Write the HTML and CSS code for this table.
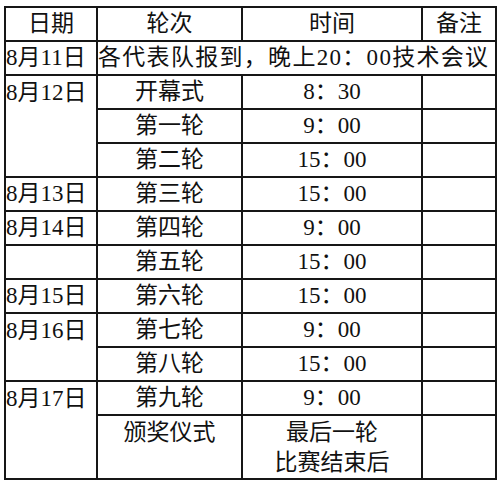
FILE: index.html
```html
<!DOCTYPE html>
<html lang="zh-CN">
<head>
<meta charset="utf-8">
<title>赛程表</title>
<link rel="stylesheet" href="styles.css">
</head>
<body>
<table class="schedule">
  <colgroup>
    <col class="c-date">
    <col class="c-round">
    <col class="c-time">
    <col class="c-note">
  </colgroup>
  <tr class="row">
    <th class="head">日期</th>
    <th class="head">轮次</th>
    <th class="head">时间</th>
    <th class="head">备注</th>
  </tr>
  <tr class="row">
    <td class="date">8月11日</td>
    <td class="wide" colspan="3">各代表队报到，晚上20：00技术会议</td>
  </tr>
  <tr class="row">
    <td class="date top" rowspan="3">8月12日</td>
    <td class="mid">开幕式</td>
    <td class="mid">8：30</td>
    <td></td>
  </tr>
  <tr class="row">
    <td class="mid">第一轮</td>
    <td class="mid">9：00</td>
    <td></td>
  </tr>
  <tr class="row">
    <td class="mid">第二轮</td>
    <td class="mid">15：00</td>
    <td></td>
  </tr>
  <tr class="row">
    <td class="date">8月13日</td>
    <td class="mid">第三轮</td>
    <td class="mid">15：00</td>
    <td></td>
  </tr>
  <tr class="row">
    <td class="date">8月14日</td>
    <td class="mid">第四轮</td>
    <td class="mid">9：00</td>
    <td></td>
  </tr>
  <tr class="row">
    <td class="date"></td>
    <td class="mid">第五轮</td>
    <td class="mid">15：00</td>
    <td></td>
  </tr>
  <tr class="row">
    <td class="date">8月15日</td>
    <td class="mid">第六轮</td>
    <td class="mid">15：00</td>
    <td></td>
  </tr>
  <tr class="row">
    <td class="date top" rowspan="2">8月16日</td>
    <td class="mid">第七轮</td>
    <td class="mid">9：00</td>
    <td></td>
  </tr>
  <tr class="row">
    <td class="mid">第八轮</td>
    <td class="mid">15：00</td>
    <td></td>
  </tr>
  <tr class="row">
    <td class="date top" rowspan="2">8月17日</td>
    <td class="mid">第九轮</td>
    <td class="mid">9：00</td>
    <td></td>
  </tr>
  <tr class="row tall">
    <td class="mid top">颁奖仪式</td>
    <td class="mid top multi">最后一轮<br>比赛结束后</td>
    <td></td>
  </tr>
</table>
</body>
</html>
```
FILE: styles.css
```css
html, body {
  margin: 0;
  padding: 0;
  background: #ffffff;
}

body {
  padding: 6px 0 0 4px;
  font-family: "Liberation Serif", "Noto Sans CJK SC", serif;
  font-size: 23px;
  color: #111111;
}

.schedule {
  border-collapse: collapse;
  table-layout: fixed;
  width: 491px;
}

.c-date { width: 92px; }
.c-round { width: 145px; }
.c-time { width: 180px; }
.c-note { width: 74px; }

.schedule th,
.schedule td {
  border: 2px solid #161616;
  padding: 0;
  line-height: 32px;
  white-space: nowrap;
  overflow: hidden;
  vertical-align: middle;
}

.row {
  height: 34px;
}

.head {
  font-weight: normal;
  text-align: center;
}

.date {
  text-align: left;
  padding-left: 1px;
}

.mid {
  text-align: center;
}

.wide {
  text-align: left;
  letter-spacing: 1.3px;
  padding-left: 1px;
}

.schedule .top {
  vertical-align: top;
  padding-top: 1px;
}

.tall {
  height: 62px;
}

.schedule .multi {
  line-height: 30px;
  padding-top: 2px;
}
```
